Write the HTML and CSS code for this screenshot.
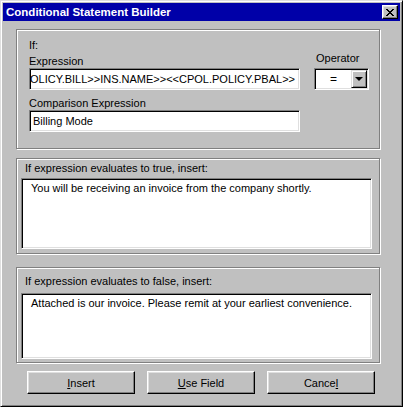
FILE: index.html
```html
<!DOCTYPE html>
<html lang="en">

<head>
    <meta charset="UTF-8">
    <meta name="viewport" content="width=device-width, initial-scale=1.0">
    <title>Conditional Statement Builder</title>
    <link rel="stylesheet" href="styles.css">
</head>

<body>
    <div class="window">
        <div class="titlebar">
            <span class="title">Conditional Statement Builder</span>
            <div class="close">
                <svg width="8" height="7" viewBox="0 0 8 7">
                    <path d="M0 0h2v1h1v1h2V1h1V0h2v1H7v1H6v1H5v1h1v1h1v1h1v1H6V6H5V5H3v1H2v1H0V6h1V5h1V4h1V3H2V2H1V1H0z" fill="#000"/>
                </svg>
            </div>
        </div>

        <div class="content">
            <div class="group group-if">
                <div class="if-grid">
                    <div class="lbl if-lbl">If:</div>
                    <div class="lbl expr-lbl">Expression</div>
                    <div class="lbl op-lbl">Operator</div>
                    <div class="field expr"><span>&lt;&lt;POL.POLICY.BILL&gt;&gt;INS.NAME&gt;&gt;&lt;&lt;CPOL.POLICY.PBAL&gt;&gt;</span></div>
                    <div class="combo">
                        <span class="combo-val">=</span>
                        <span class="combo-btn"><span class="arrow"></span></span>
                    </div>
                    <div class="lbl cmp-lbl">Comparison Expression</div>
                    <div class="field cmp">Billing Mode</div>
                </div>
            </div>

            <div class="group group-true">
                <div class="lbl glbl">If expression evaluates to true, insert:</div>
                <div class="memo memo-true">You will be receiving an invoice from the company shortly.</div>
            </div>

            <div class="group group-false">
                <div class="lbl glbl">If expression evaluates to false, insert:</div>
                <div class="memo memo-false">Attached is our invoice. Please remit at your earliest convenience.</div>
            </div>

            <div class="buttons">
                <div class="btn"><u>I</u>nsert</div>
                <div class="btn"><u>U</u>se Field</div>
                <div class="btn">Cance<u>l</u></div>
            </div>
        </div>
    </div>
</body>

</html>
```

FILE: styles.css
```css
body {
    margin: 0;
    font-family: "Liberation Sans", Arial, sans-serif;
    font-size: 11px;
    color: #000;
}

.window {
    width: 403px;
    height: 407px;
    box-sizing: border-box;
    background: #c0c0c0;
    border: 1px solid;
    border-color: #dfdfdf #000 #000 #dfdfdf;
    box-shadow: inset 1px 1px #fff, inset -1px -1px #808080;
    padding: 2px;
}

/* title bar */
.titlebar {
    height: 18px;
    background: #0000a8;
    display: flex;
    align-items: center;
    justify-content: space-between;
    padding: 0 2px 0 3px;
}

.title {
    color: #fff;
    font-weight: bold;
    font-size: 11.5px;
}

.close {
    width: 16px;
    height: 14px;
    box-sizing: border-box;
    background: #c0c0c0;
    border: 1px solid;
    border-color: #fff #000 #000 #fff;
    box-shadow: inset -1px -1px #808080, inset 1px 1px #dfdfdf;
    display: flex;
    align-items: center;
    justify-content: center;
}

.content {
    padding: 8px 0 0 13px;
}

/* group boxes */
.group {
    width: 364px;
    box-sizing: border-box;
    border: 1px solid #808080;
    box-shadow: 1px 1px 0 #fff, inset 1px 1px 0 #fff;
}

.lbl {
    line-height: 13px;
    white-space: nowrap;
}

.group-if {
    height: 120px;
    padding: 9px 0 0 12px;
}

.if-grid {
    display: grid;
    grid-template-columns: 271px 55px;
    grid-template-rows: 13px 16px 22px 20px 22px;
    column-gap: 14px;
}

.if-lbl {
    grid-column: 1 / 3;
}

.expr-lbl,
.cmp-lbl {
    align-self: end;
}

.cmp-lbl,
.cmp {
    grid-column: 1;
}

.op-lbl {
    align-self: end;
    padding: 0 0 3px 2px;
}

.field,
.combo,
.memo {
    background: #fff;
    box-sizing: border-box;
    border: 1px solid;
    border-color: #808080 #fff #fff #808080;
    box-shadow: inset 1px 1px #000, inset -1px -1px #dfdfdf;
}

.field {
    height: 22px;
    display: flex;
    align-items: center;
    padding: 0 2px 0 3px;
    white-space: nowrap;
    overflow: hidden;
}

.expr {
    justify-content: flex-end;
    padding-right: 4px;
}

.expr span {
    flex-shrink: 0;
}

.combo {
    height: 22px;
    display: flex;
    align-items: center;
    padding: 1px;
}

.combo-val {
    flex: 1;
    text-align: center;
    font-size: 12px;
}

.combo-btn {
    width: 16px;
    height: 18px;
    box-sizing: border-box;
    background: #c0c0c0;
    border: 1px solid;
    border-color: #dfdfdf #000 #000 #dfdfdf;
    box-shadow: inset 1px 1px #fff, inset -1px -1px #808080;
    display: flex;
    align-items: center;
    justify-content: center;
}

.arrow {
    width: 0;
    height: 0;
    border-left: 4px solid transparent;
    border-right: 4px solid transparent;
    border-top: 4px solid #000;
}

.group-true {
    height: 96px;
    margin-top: 9px;
    padding: 3px 0 0 4px;
}

.group-false {
    height: 96px;
    margin-top: 13px;
    padding: 7px 0 0 4px;
}

.glbl {
    line-height: 12px;
    padding-left: 4px;
}

.memo {
    width: 351px;
    padding: 3px 9px;
    line-height: 13px;
}

.memo-true {
    margin-top: 4px;
    height: 71px;
}

.memo-false {
    margin-top: 6px;
    height: 66px;
}

/* bottom buttons */
.buttons {
    display: flex;
    gap: 12px;
    margin-top: 8px;
    padding-left: 11px;
}

.btn {
    width: 108px;
    height: 23px;
    box-sizing: border-box;
    border: 1px solid;
    border-color: #fff #000 #000 #fff;
    box-shadow: inset -1px -1px #808080, inset 1px 1px #dfdfdf;
    display: flex;
    align-items: center;
    justify-content: center;
}
```
